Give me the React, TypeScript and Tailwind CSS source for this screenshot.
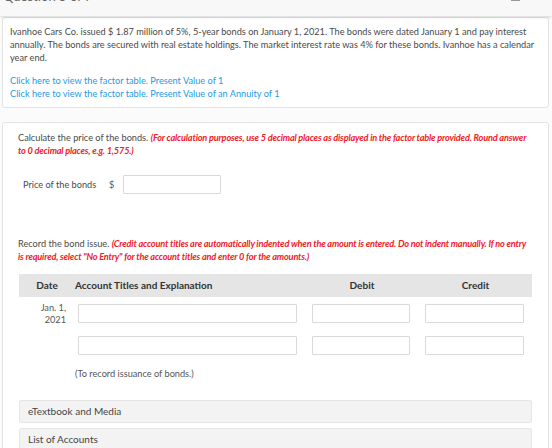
import React from 'react';

const font = { fontFamily: 'Lato, "Open Sans", sans-serif' };

function Field({ className }: { className: string }) {
  return <div className={`h-[19px] border border-[#d9d9d9] bg-white rounded-[1px] ${className}`} />;
}

export default function App() {
  return (
    <div className="w-[552px] h-[448px] overflow-hidden bg-[#fbfbfb] text-[#4a4a4a]" style={font}>
      {/* top bar, mostly scrolled away */}
      <div className="relative h-[16px] bg-[#f8f8f8] shadow-[0_1px_3px_rgba(0,0,0,0.16)] overflow-hidden z-10">
        <div className="absolute left-[3px] top-[-13px] text-[13px] text-[#666]">Question 5 of 7</div>
        <div className="absolute left-[492px] top-[-13px] text-[12px] text-[#888]">‹ ›</div>
        <div className="absolute left-[511px] top-[-8px] w-[9px] h-[9px] border border-[#999]" />
      </div>

      <div className="pl-[2px] pr-[3px] pt-[1px]">
        {/* problem text card */}
        <div className="bg-white border border-[#e3e3e3] rounded-[3px] pl-[7px] pr-[6px] pt-[7px] pb-[7px] text-[9.2px] leading-[13px]">
          <p>
            Ivanhoe Cars Co. issued $ 1.87 million of 5%, 5-year bonds on January 1, 2021. The bonds were dated January 1 and pay interest
            annually. The bonds are secured with real estate holdings. The market interest rate was 4% for these bonds. Ivanhoe has a calendar
            year end.
          </p>
          <div className="mt-[10px] text-[#1e9ae6]">
            <div>Click here to view the factor table. Present Value of 1</div>
            <div>Click here to view the factor table. Present Value of an Annuity of 1</div>
          </div>
        </div>

        {/* question card */}
        <div className="mt-[14px] bg-white border border-[#e3e3e3] rounded-[3px] h-[340px] pl-[15px] pr-[18px] pt-[8px] text-[9.2px] leading-[13px]">
          <p>
            Calculate the price of the bonds.{' '}
            <span className="text-[#f0202a] font-bold italic tracking-[-0.18px]">
              (For calculation purposes, use 5 decimal places as displayed in the factor table provided. Round answer to 0 decimal places, e.g. 1,575.)
            </span>
          </p>

          <div className="flex items-center mt-[18px] ml-[5px]">
            <span className="w-[86px]">Price of the bonds</span>
            <span className="w-[14px] text-[#555]">$</span>
            <Field className="w-[98px]" />
          </div>

          <p className="mt-[43px]">
            Record the bond issue.{' '}
            <span className="text-[#f0202a] font-bold italic tracking-[-0.18px]">
              (Credit account titles are automatically indented when the amount is entered. Do not indent manually. If no entry is required, select "No Entry" for the account titles and enter 0 for the amounts.)
            </span>
          </p>

          <div className="mt-[11px] w-[513px] ml-[1px]">
            <div className="flex items-center h-[23px] bg-[#e5e5e5] font-bold text-[#333] text-[10px]">
              <div className="w-[56px] text-center">Date</div>
              <div className="w-[238px]">Account Titles and Explanation</div>
              <div className="w-[98px] text-center">Debit</div>
              <div className="ml-[15px] w-[99px] text-center">Credit</div>
            </div>

            <div className="flex items-start h-[32px] mt-[7px]">
              <div className="w-[47px] text-right leading-[12px] text-[#555] mt-[-2px]">
                Jan. 1,
                <br />
                2021
              </div>
              <Field className="ml-[12px] w-[219px]" />
              <Field className="ml-[15px] w-[98px]" />
              <Field className="ml-[15px] w-[99px]" />
            </div>

            <div className="flex items-start">
              <Field className="ml-[59px] w-[219px]" />
              <Field className="ml-[15px] w-[98px]" />
              <Field className="ml-[15px] w-[99px]" />
            </div>

            <div className="mt-[12px] ml-[56px] text-[#555]">(To record issuance of bonds.)</div>

            <div className="mt-[20px] h-[23px] flex items-center px-[8px] bg-[#f3f3f3] border border-[#e6e6e6] rounded-[2px] text-[10px] text-[#444]">
              eTextbook and Media
            </div>
            <div className="mt-[5px] h-[23px] flex items-center px-[8px] bg-[#f3f3f3] border border-[#e6e6e6] rounded-[2px] text-[10px] text-[#444]">
              List of Accounts
            </div>
          </div>
        </div>
      </div>
    </div>
  );
}
